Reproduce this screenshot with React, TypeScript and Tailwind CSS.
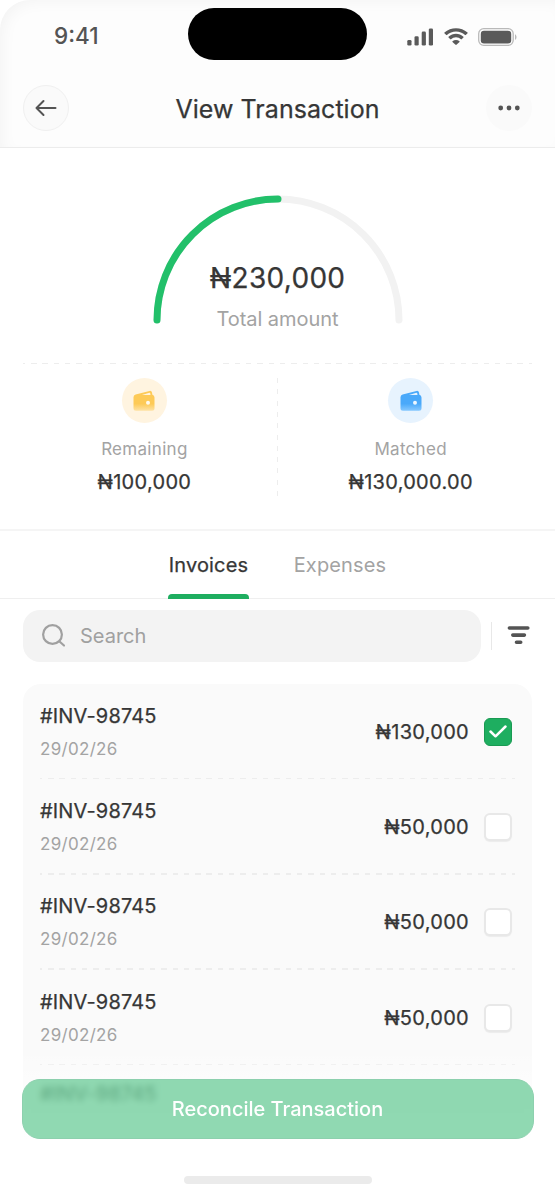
import React, { useState } from "react";

interface Invoice {
	id: number;
	number: string;
	date: string;
	amount: string;
}

const invoices: Invoice[] = [
	{ id: 1, number: "#INV-98745", date: "29/02/26", amount: "₦130,000" },
	{ id: 2, number: "#INV-98745", date: "29/02/26", amount: "₦50,000" },
	{ id: 3, number: "#INV-98745", date: "29/02/26", amount: "₦50,000" },
	{ id: 4, number: "#INV-98745", date: "29/02/26", amount: "₦50,000" },
	{ id: 5, number: "#INV-98745", date: "", amount: "" },
];

// Slightly heavier than regular, lighter than medium
const strong = "text-[#363636] [-webkit-text-stroke:0.25px_#363636]";

// Dashed separator, horizontal
const DashedLine: React.FC<{ className?: string }> = ({ className = "" }) => (
	<div className={`h-[1.5px] bg-[repeating-linear-gradient(90deg,#ededed_0_2.2px,transparent_2.2px_8.1px,#ededed_8.1px_11.31px)] ${className}`} />
);

const StatusBar: React.FC = () => (
	<div className="relative flex h-[72px] items-center justify-between pl-[54px] pr-[38px]">
		<span className="text-[22.5px] leading-none font-medium text-[#545454]">9:41</span>
		{/* Dynamic island */}
		<div className="absolute left-[188px] top-[8px] h-[52px] w-[179px] rounded-full bg-black" />
		<div className="flex items-center gap-[10px] pt-[1px] text-[#5a5a5a]">
			<svg className="h-[18px] w-[27px]" viewBox="0 0 27 18" fill="currentColor">
				<rect x="0.3" y="12" width="4.2" height="5.5" rx="1.3" />
				<rect x="7.5" y="8.3" width="4.2" height="9.2" rx="1.3" />
				<rect x="14.7" y="3.6" width="4.2" height="13.9" rx="1.3" />
				<rect x="21.8" y="0.5" width="4.2" height="17" rx="1.3" />
			</svg>
			<svg className="h-[17px] w-[24px]" viewBox="0 0 17 12" fill="currentColor" preserveAspectRatio="none">
				<path d="M8.5 2.4c2.4 0 4.7.9 6.4 2.6.1.1.3.1.5 0l1.3-1.3c.1-.1.1-.4 0-.5C12.1-.9 4.9-.9.3 3.2c-.1.1-.1.4 0 .5L1.6 5c.1.1.3.1.5 0 1.7-1.7 4-2.6 6.4-2.6z" />
				<path d="M8.5 6.6c1.3 0 2.6.5 3.5 1.4.1.1.4.1.5 0l1.3-1.3c.1-.2.1-.4 0-.5-3-2.8-7.6-2.8-10.6 0-.1.1-.1.3 0 .5L4.5 8c.1.1.4.1.5 0 .9-.9 2.2-1.4 3.5-1.4z" />
				<path d="M11 9.4c.1.1.1.3 0 .5l-2.2 2c-.2.1-.4.1-.6 0L6 9.9c-.1-.2-.1-.4 0-.5 1.4-1.2 3.6-1.2 5 0z" />
			</svg>
			<svg className="h-[18px] w-[39px]" viewBox="0 0 39 18" fill="none">
				<rect x="0.7" y="0.7" width="34.5" height="16.6" rx="5" stroke="#b9b9b9" strokeWidth="1.3" />
				<rect x="2.8" y="2.7" width="30.4" height="12.7" rx="3.2" fill="currentColor" />
				<path d="M37 6.2v5.6c2-.9 2-4.7 0-5.6z" fill="#b9b9b9" />
			</svg>
		</div>
	</div>
);

const Header: React.FC = () => (
	<header className="h-[148px] rounded-tl-[30px] border-b border-[#ececec] bg-[#fdfdfd] shadow-[inset_6px_5px_16px_-4px_rgba(0,0,0,0.045)]">
		<StatusBar />
		<div className="flex h-[72px] items-center justify-between px-[23px]">
			<button className="flex size-[46px] items-center justify-center rounded-full border border-[#f0f0f0] bg-[#fafafa]">
				<svg className="h-[18px] w-[22px]" viewBox="0 0 22 18" fill="none" stroke="#545454" strokeWidth="2" strokeLinecap="round" strokeLinejoin="round">
					<path d="M20.5 9H1.5M8.5 2L1.5 9l7 7" />
				</svg>
			</button>
			<h1 className={`pt-[2px] text-[25px] leading-none tracking-[0.050px] ${strong}`}>View Transaction</h1>
			<button className="flex size-[46px] items-center justify-center rounded-full bg-[#fafafa]">
				<svg className="h-[6px] w-[22px]" viewBox="0 0 22 6" fill="#545454">
					<circle cx="2.7" cy="3" r="2.4" />
					<circle cx="11" cy="3" r="2.4" />
					<circle cx="19.3" cy="3" r="2.4" />
				</svg>
			</button>
		</div>
	</header>
);

const Gauge: React.FC = () => (
	<div className="relative mx-auto mt-[47px] h-[129px] w-[250px]">
		<svg className="h-[129px] w-[250px]" viewBox="0 0 250 129" fill="none" strokeWidth="7" strokeLinecap="round">
			<path d="M4 125A121 121 0 0 1 246 125" stroke="#f2f2f2" />
			<path d="M4 125A121 121 0 0 1 125 4" stroke="#22c06a" />
		</svg>
		<div className="absolute inset-x-0 top-[69px] text-center">
			<p className={`text-[28px] leading-[28px] tracking-[0.300px] ${strong}`}>₦230,000</p>
			<p className="mt-[17px] text-[20px] leading-[20px] tracking-[-0.050px] text-[#a3a3a3]">Total amount</p>
		</div>
	</div>
);

const WalletIcon: React.FC<{ id: string; from: string; to: string }> = ({ id, from, to }) => (
	<svg className="h-[22px] w-[22px]" viewBox="0 0 22 22">
		<defs>
			<linearGradient id={id} x1="0" y1="0" x2="0" y2="1">
				<stop offset="0.65" stopColor={from} />
				<stop offset="1" stopColor={to} />
			</linearGradient>
		</defs>
		<path
			fillRule="evenodd"
			d="M0.5 7.2Q0.5 5 2.6 4.4L16.5 0.9Q18.6 0.5 19 2.6L19.4 4.8Q21.5 5.2 21.5 7.5V18.2Q21.5 20.7 19 20.7H3Q0.5 20.7 0.5 18.2ZM9 4.9H17.5L17.2 3.3Q17 2.6 16.3 2.8Z"
			fill={`url(#${id})`}
		/>
		<circle cx="15" cy="12.8" r="2" fill="white" fillOpacity="0.9" />
	</svg>
);

const Summary: React.FC = () => (
	<div className="flex h-[165px] pt-[14px]">
		<div className="flex flex-1 flex-col items-center pl-[12px]">
			<div className="flex size-[45px] items-center justify-center rounded-full bg-[#fff4e0]">
				<WalletIcon id="wallet-yellow" from="#fdca57" to="#fee2a4" />
			</div>
			<p className="mt-[16px] text-[17px] leading-[20px] tracking-[0.300px] text-[#a3a3a3]">Remaining</p>
			<p className={`mt-[12px] text-[20px] leading-[22px] tracking-[0.300px] ${strong}`}>₦100,000</p>
		</div>
		<div className="h-[119px] w-[1.5px] bg-[repeating-linear-gradient(180deg,#ededed_0_5px,transparent_5px_11.3px)]" />
		<div className="flex flex-1 flex-col items-center pr-[12px]">
			<div className="flex size-[45px] items-center justify-center rounded-full bg-[#e7f3fe]">
				<WalletIcon id="wallet-blue" from="#4aa9fa" to="#86c8ff" />
			</div>
			<p className="mt-[16px] text-[17px] leading-[20px] tracking-[0.300px] text-[#a3a3a3]">Matched</p>
			<p className={`mt-[12px] text-[20px] leading-[22px] tracking-[0.300px] ${strong}`}>₦130,000.00</p>
		</div>
	</div>
);

const Checkbox: React.FC<{ checked: boolean; onChange: () => void }> = ({ checked, onChange }) => (
	<button
		onClick={onChange}
		className={`flex size-[28px] items-center justify-center rounded-[6px] ${
			checked
				? "border border-[#199a52] bg-[#1eae60]"
				: "border-2 border-[#e8e8e8] bg-white shadow-[0_1px_1px_rgba(0,0,0,0.06)]"
		}`}
	>
		{checked && (
			<svg className="h-[13px] w-[18px]" viewBox="0 0 18 13" fill="none" stroke="white" strokeWidth="2.5" strokeLinecap="round" strokeLinejoin="round">
				<path d="M1.5 6.5L6.5 11.3L16.5 1.5" />
			</svg>
		)}
	</button>
);

export default function App() {
	const [activeTab, setActiveTab] = useState<"invoices" | "expenses">("invoices");
	const [selected, setSelected] = useState<number[]>([1]);

	const toggle = (id: number) => {
		setSelected(selected.includes(id) ? selected.filter((s) => s !== id) : [...selected, id]);
	};

	return (
		<div className="relative h-[1200px] w-[555px] overflow-hidden bg-white font-['Inter',sans-serif]">
			<Header />
			<Gauge />
			<DashedLine className="mx-[23px] mt-[38.5px]" />
			<Summary />

			{/* Tabs */}
			<div className="flex h-[70px] justify-center gap-[44px] border-b border-t-2 border-b-[#efefef] border-t-[#f5f5f5] text-[20px]">
				<button
					onClick={() => setActiveTab("invoices")}
					className={`relative w-[81px] pt-[1px] tracking-[0.150px] ${activeTab === "invoices" ? strong : "text-[#a3a3a3]"}`}
				>
					Invoices
					<span className="absolute inset-x-0 -bottom-px h-[5px] rounded-t-[4px] bg-[#1eae60]" />
				</button>
				<button onClick={() => setActiveTab("expenses")} className="w-[94px] pt-[1px] tracking-[0.150px] text-[#a3a3a3]">
					Expenses
				</button>
			</div>

			{/* Search */}
			<div className="flex items-center pl-[23px] pr-[25.5px] pt-[11px]">
				<div className="flex h-[52px] w-[458px] items-center gap-[14px] rounded-[17px] bg-[#f3f3f3] pl-[19px]">
					<svg className="size-[24px]" viewBox="0 0 24 24" fill="none" stroke="#a0a0a0" strokeWidth="2.2" strokeLinecap="round">
						<circle cx="10.5" cy="10.5" r="9.4" />
						<path d="M17.5 17.5L22 21.5" />
					</svg>
					<span className="text-[20px] text-[#a0a0a0]">Search</span>
				</div>
				<div className="ml-[10px] h-[28px] w-px bg-[#e8e8e8]" />
				<svg className="mb-[1px] ml-auto h-[19px] w-[23px]" viewBox="0 0 23 19" fill="none" stroke="#545454" strokeWidth="3.6" strokeLinecap="round">
					<path d="M2.4 2H20.8M5.8 9.1H17.4M9.5 16.2H13.7" />
				</svg>
			</div>

			{/* Invoice list */}
			<div className="mx-[23px] mt-[22px] rounded-t-[18px] bg-[#fafafa] px-[17px]">
				{invoices.map((invoice) => (
					<div key={invoice.id} className="h-[95.3px]">
						<div className={`flex h-[93.8px] items-center justify-between pr-[3px] ${invoice.amount ? "pt-[2px]" : "pb-[5px]"}`}>
							<div>
								<p className={`text-[20px] leading-[20px] tracking-[0.150px] ${strong}`}>{invoice.number}</p>
								<p className="mt-[14px] h-[18px] text-[17px] leading-[18px] tracking-[0.300px] text-[#a3a3a3]">{invoice.date}</p>
							</div>
							{invoice.amount && (
								<div className="flex items-center gap-[15px]">
									<span className={`text-[20px] tracking-[0.300px] ${strong}`}>{invoice.amount}</span>
									<Checkbox checked={selected.includes(invoice.id)} onChange={() => toggle(invoice.id)} />
								</div>
							)}
						</div>
						<DashedLine />
					</div>
				))}
			</div>

			{/* Bottom action, sits over the list */}
			<div className="absolute inset-x-0 bottom-0 flex h-[152px] flex-col items-center bg-[linear-gradient(180deg,rgba(255,255,255,0)_0px,rgba(255,255,255,0.4)_31px,white_92px)] pt-[31px]">
				<div className="absolute inset-x-0 top-[92px] bottom-0 bg-white" />
				<button className="relative h-[60px] w-[512px] rounded-[18px] border border-[#8dd0ae] bg-[#22b366]/50 text-[20px] font-medium text-white backdrop-blur-[3px]">
					Reconcile Transaction
				</button>
				<div className="relative mt-[37px] h-[8px] w-[188px] rounded-full bg-[#ebebeb]" />
			</div>
		</div>
	);
}
